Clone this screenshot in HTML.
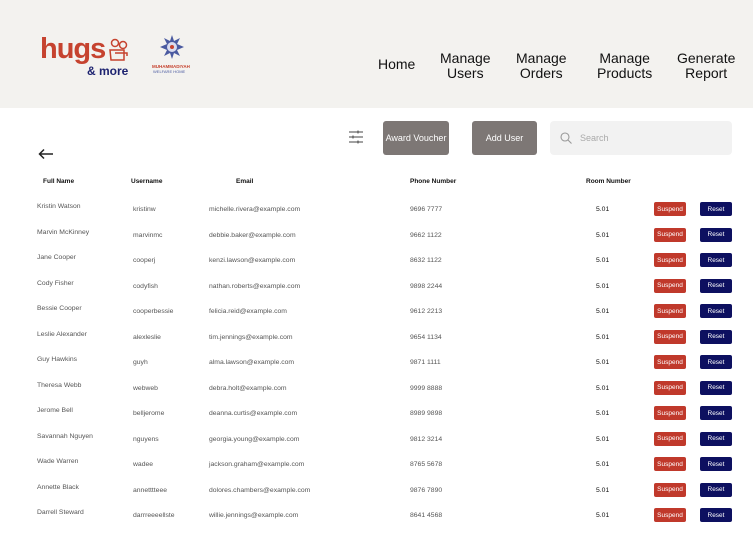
<!DOCTYPE html>
<html><head><meta charset="utf-8"><style>
*{margin:0;padding:0;box-sizing:border-box}
body{width:753px;height:533px;overflow:hidden;background:#fff;font-family:"Liberation Sans",sans-serif;position:relative;color:#333}
.hdr{position:absolute;left:0;top:0;width:753px;height:108px;background:#f3f2ef}
.nav{position:absolute;font-size:14px;color:#111;text-align:center;line-height:15px}
.a{position:absolute}
.btn{position:absolute;background:#7d7775;color:#fff;border-radius:3px;font-size:9px;display:flex;align-items:center;justify-content:center}
.th{position:absolute;top:178px;font-size:6.5px;font-weight:bold;color:#111}
.r{position:absolute;left:0;width:753px;height:25px;font-size:6.8px;color:#555}
.r span{position:absolute}
.s{position:absolute;left:654px;width:32px;height:14px;background:#c0392b;color:#fff;border-radius:2px;font-size:6.5px;display:flex;align-items:center;justify-content:center}
.x{position:absolute;left:700px;width:32px;height:14px;background:#0d1060;color:#fff;border-radius:2px;font-size:6.5px;display:flex;align-items:center;justify-content:center}
</style></head><body>
<div class="hdr"></div>
<div class="a" style="left:40px;top:33px;font-size:29px;font-weight:bold;color:#c6432f;letter-spacing:-1px">hugs</div>
<svg class="a" style="left:107px;top:38px" width="24" height="24" viewBox="0 0 24 24" fill="none" stroke="#c6432f" stroke-width="1.5"><circle cx="8" cy="5" r="3.5"/><circle cx="16" cy="7" r="3.5"/><path d="M3 12h14v10H4zM8 15h12v3"/></svg>
<div class="a" style="left:87px;top:64px;font-size:12px;font-weight:bold;color:#1d2370">&amp; more</div>
<svg class="a" style="left:160px;top:35px" width="24" height="24" viewBox="0 0 24 24"><polygon points="12,0 14,6 20,3 17,9 24,12 17,15 20,21 14,18 12,24 10,18 4,21 7,15 0,12 7,9 4,3 10,6" fill="#4a5aa0"/><circle cx="12" cy="12" r="5" fill="#d9dcef"/><circle cx="12" cy="12" r="2" fill="#c6432f"/></svg>
<div class="a" style="left:152px;top:64px;font-size:4.5px;font-weight:bold;color:#c6432f">MUHAMMADIYAH</div>
<div class="a" style="left:153px;top:69px;font-size:4px;color:#4a5aa0">WELFARE HOME</div>
<div class="nav" style="left:378px;top:57px">Home</div>
<div class="nav" style="left:440px;top:51px">Manage<br>Users</div>
<div class="nav" style="left:516px;top:51px">Manage<br>Orders</div>
<div class="nav" style="left:597px;top:51px">Manage<br>Products</div>
<div class="nav" style="left:677px;top:51px">Generate<br>Report</div>
<svg class="a" style="left:348px;top:130px" width="16" height="14" viewBox="0 0 16 14" stroke="#444" stroke-width="1"><path d="M1 2h14M1 7h14M1 12h14"/><path d="M10 0.5v3M5 5.5v3M10 10.5v3"/></svg>
<div class="btn" style="left:383px;top:121px;width:66px;height:34px">Award Voucher</div>
<div class="btn" style="left:472px;top:121px;width:65px;height:34px">Add User</div>
<div class="a" style="left:550px;top:121px;width:182px;height:34px;background:#f2f2f2;border-radius:4px"></div>
<svg class="a" style="left:560px;top:132px" width="12" height="12" viewBox="0 0 12 12" fill="none" stroke="#999" stroke-width="1.1"><circle cx="5" cy="5" r="4"/><path d="M8 8l3.5 3.5"/></svg>
<div class="a" style="left:580px;top:133px;font-size:9px;color:#aaa">Search</div>
<svg class="a" style="left:38px;top:148px" width="16" height="12" viewBox="0 0 16 12" fill="none" stroke="#222" stroke-width="1.5"><path d="M15 6H2M6 1.5L1.5 6 6 10.5"/></svg>
<div class="th" style="left:43px">Full Name</div>
<div class="th" style="left:131px">Username</div>
<div class="th" style="left:236px">Email</div>
<div class="th" style="left:410px">Phone Number</div>
<div class="th" style="left:586px">Room Number</div>

<div class="r" style="top:200px"><span style="left:37px;top:3px">Kristin Watson</span><span style="left:133px;top:6px">kristinw</span><span style="left:209px;top:6px">michelle.rivera@example.com</span><span style="left:410px;top:6px">9696 7777</span><span style="left:596px;top:6px;color:#111">5.01</span><div class="s" style="top:2px">Suspend</div><div class="x" style="top:2px">Reset</div></div>
<div class="r" style="top:225.5px"><span style="left:37px;top:3px">Marvin McKinney</span><span style="left:133px;top:6px">marvinmc</span><span style="left:209px;top:6px">debbie.baker@example.com</span><span style="left:410px;top:6px">9662 1122</span><span style="left:596px;top:6px;color:#111">5.01</span><div class="s" style="top:2px">Suspend</div><div class="x" style="top:2px">Reset</div></div>
<div class="r" style="top:251px"><span style="left:37px;top:3px">Jane Cooper</span><span style="left:133px;top:6px">cooperj</span><span style="left:209px;top:6px">kenzi.lawson@example.com</span><span style="left:410px;top:6px">8632 1122</span><span style="left:596px;top:6px;color:#111">5.01</span><div class="s" style="top:2px">Suspend</div><div class="x" style="top:2px">Reset</div></div>
<div class="r" style="top:276.5px"><span style="left:37px;top:3px">Cody Fisher</span><span style="left:133px;top:6px">codyfish</span><span style="left:209px;top:6px">nathan.roberts@example.com</span><span style="left:410px;top:6px">9898 2244</span><span style="left:596px;top:6px;color:#111">5.01</span><div class="s" style="top:2px">Suspend</div><div class="x" style="top:2px">Reset</div></div>
<div class="r" style="top:302px"><span style="left:37px;top:3px">Bessie Cooper</span><span style="left:133px;top:6px">cooperbessie</span><span style="left:209px;top:6px">felicia.reid@example.com</span><span style="left:410px;top:6px">9612 2213</span><span style="left:596px;top:6px;color:#111">5.01</span><div class="s" style="top:2px">Suspend</div><div class="x" style="top:2px">Reset</div></div>
<div class="r" style="top:327.5px"><span style="left:37px;top:3px">Leslie Alexander</span><span style="left:133px;top:6px">alexleslie</span><span style="left:209px;top:6px">tim.jennings@example.com</span><span style="left:410px;top:6px">9654 1134</span><span style="left:596px;top:6px;color:#111">5.01</span><div class="s" style="top:2px">Suspend</div><div class="x" style="top:2px">Reset</div></div>
<div class="r" style="top:353px"><span style="left:37px;top:3px">Guy Hawkins</span><span style="left:133px;top:6px">guyh</span><span style="left:209px;top:6px">alma.lawson@example.com</span><span style="left:410px;top:6px">9871 1111</span><span style="left:596px;top:6px;color:#111">5.01</span><div class="s" style="top:2px">Suspend</div><div class="x" style="top:2px">Reset</div></div>
<div class="r" style="top:378.5px"><span style="left:37px;top:3px">Theresa Webb</span><span style="left:133px;top:6px">webweb</span><span style="left:209px;top:6px">debra.holt@example.com</span><span style="left:410px;top:6px">9999 8888</span><span style="left:596px;top:6px;color:#111">5.01</span><div class="s" style="top:2px">Suspend</div><div class="x" style="top:2px">Reset</div></div>
<div class="r" style="top:404px"><span style="left:37px;top:3px">Jerome Bell</span><span style="left:133px;top:6px">belljerome</span><span style="left:209px;top:6px">deanna.curtis@example.com</span><span style="left:410px;top:6px">8989 9898</span><span style="left:596px;top:6px;color:#111">5.01</span><div class="s" style="top:2px">Suspend</div><div class="x" style="top:2px">Reset</div></div>
<div class="r" style="top:429.5px"><span style="left:37px;top:3px">Savannah Nguyen</span><span style="left:133px;top:6px">nguyens</span><span style="left:209px;top:6px">georgia.young@example.com</span><span style="left:410px;top:6px">9812 3214</span><span style="left:596px;top:6px;color:#111">5.01</span><div class="s" style="top:2px">Suspend</div><div class="x" style="top:2px">Reset</div></div>
<div class="r" style="top:455px"><span style="left:37px;top:3px">Wade Warren</span><span style="left:133px;top:6px">wadee</span><span style="left:209px;top:6px">jackson.graham@example.com</span><span style="left:410px;top:6px">8765 5678</span><span style="left:596px;top:6px;color:#111">5.01</span><div class="s" style="top:2px">Suspend</div><div class="x" style="top:2px">Reset</div></div>
<div class="r" style="top:480.5px"><span style="left:37px;top:3px">Annette Black</span><span style="left:133px;top:6px">annetttteee</span><span style="left:209px;top:6px">dolores.chambers@example.com</span><span style="left:410px;top:6px">9876 7890</span><span style="left:596px;top:6px;color:#111">5.01</span><div class="s" style="top:2px">Suspend</div><div class="x" style="top:2px">Reset</div></div>
<div class="r" style="top:506px"><span style="left:37px;top:3px">Darrell Steward</span><span style="left:133px;top:6px">darrreeeellste</span><span style="left:209px;top:6px">willie.jennings@example.com</span><span style="left:410px;top:6px">8641 4568</span><span style="left:596px;top:6px;color:#111">5.01</span><div class="s" style="top:2px">Suspend</div><div class="x" style="top:2px">Reset</div></div>
</body></html>
